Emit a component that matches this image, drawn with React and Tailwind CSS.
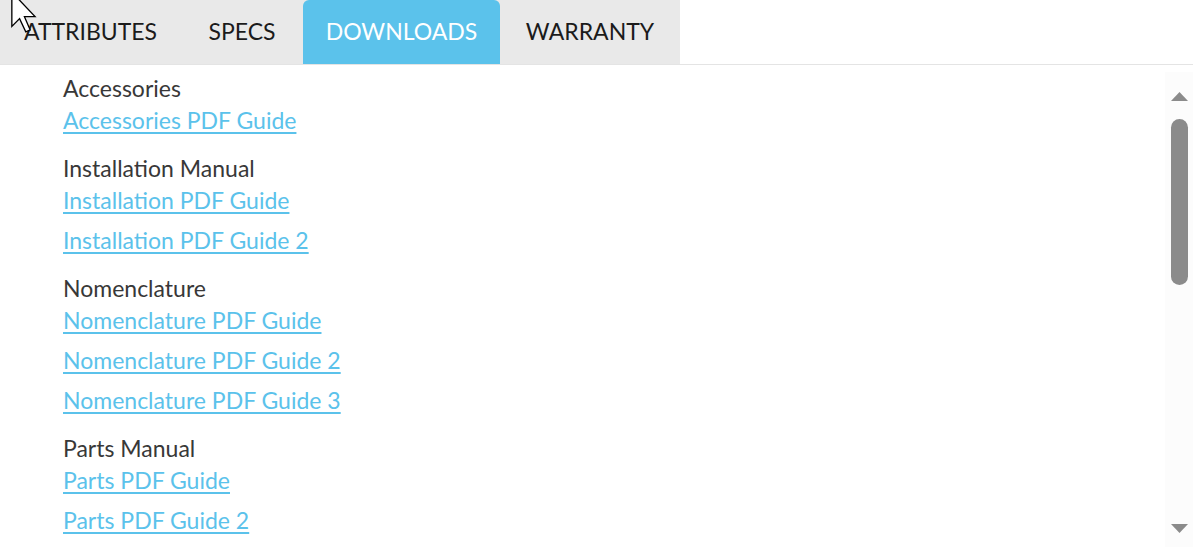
import React from 'react';

const tabs = [
  { label: 'ATTRIBUTES', w: 'w-[181px]' },
  { label: 'SPECS', w: 'w-[122px]' },
  { label: 'DOWNLOADS', w: 'w-[197px]', active: true },
  { label: 'WARRANTY', w: 'w-[180px]' },
];

const groups = [
  { title: 'Accessories', links: ['Accessories PDF Guide'] },
  { title: 'Installation Manual', links: ['Installation PDF Guide', 'Installation PDF Guide 2'] },
  { title: 'Nomenclature', links: ['Nomenclature PDF Guide', 'Nomenclature PDF Guide 2', 'Nomenclature PDF Guide 3'] },
  { title: 'Parts Manual', links: ['Parts PDF Guide', 'Parts PDF Guide 2'] },
];

function Cursor() {
  return (
    <svg className="absolute left-[9px] top-[-9px]" width="30" height="42" viewBox="0 0 12 19">
      <polygon points="0.5,0.5 0.5,16 4,12.5 6.8,18.5 8.8,17.6 6.2,11.6 11,11.6" fill="#fff" stroke="#000" strokeWidth="0.6" strokeLinejoin="miter" />
    </svg>
  );
}

export default function App() {
  return (
    <div className="relative h-[547px] w-[1193px] overflow-hidden bg-white font-['Lato','Noto_Sans',sans-serif]">
      {/* tab bar */}
      <div className="flex h-[65px] border-b border-[#e4e4e4]">
        <div className="flex bg-[#e9e9e9]">
          {tabs.map((t) => (
            <div
              key={t.label}
              className={
                t.active
                  ? `flex items-center justify-center rounded-t-md bg-[#5bc2eb] pb-[1px] text-[23px] text-white ${t.w}`
                  : `flex items-center justify-center pb-[1px] text-[23px] text-[#1b1b1b] ${t.w}`
              }
            >
              {t.label}
            </div>
          ))}
        </div>
      </div>

      {/* content + scrollbar */}
      <div className="flex h-[482px] pt-[7px]">
        <div className="flex-1 overflow-hidden pl-[63px]">
          {groups.map((g) => (
            <div key={g.title} className="mb-4">
              <div className="h-8 leading-8 text-[23px] text-[#383838]">{g.title}</div>
              <div className="flex flex-col gap-2">
                {g.links.map((l) => (
                  <a
                    key={l}
                    href="#"
                    className="h-8 self-start leading-8 text-[23px] text-[#5bc2eb] underline decoration-2 underline-offset-[3px]"
                  >
                    {l}
                  </a>
                ))}
              </div>
            </div>
          ))}
        </div>
        <div className="flex w-[28px] flex-col items-center bg-[#fcfcfc] pt-[20px]">
          <svg width="17" height="9" viewBox="0 0 17 9">
            <polygon points="0,9 8.5,0 17,9" fill="#8b8b8b" />
          </svg>
          <div className="mt-[18px] h-[166px] w-[17px] rounded-full bg-[#8b8b8b]" />
          <div className="flex-1" />
          <svg className="mb-[14px]" width="17" height="9" viewBox="0 0 17 9">
            <polygon points="0,0 17,0 8.5,9" fill="#8b8b8b" />
          </svg>
        </div>
      </div>

      <Cursor />
    </div>
  );
}
